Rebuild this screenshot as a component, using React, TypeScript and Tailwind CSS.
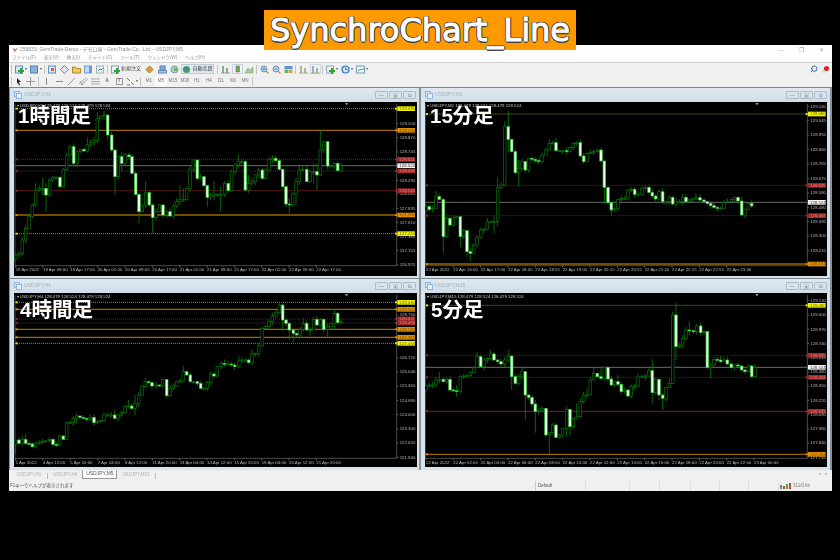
import React from 'react';
import { Search } from 'lucide-react';

type Level = { y: number; kind: 'yellow' | 'orange' | 'red' | 'redSolid' | 'redDim' | 'grey'; price: string };

interface ChartProps {
  name: string;
  label: string;
  labelClass: string;
  ox: number;
  oy: number;
  w: number;
  axisX: number;
  axisY: number;
  startX: number;
  marker: number;
  candles: string;
  levels: Level[];
  prices: [number, string][];
  times: string[];
}

const LINE: Record<string, string> = { yellow: '#8f8f00', orange: '#9c6600', red: '#6e1c1c', redSolid: '#7a2020', redDim: '#551616', grey: '#6c6c6c' };
const TAG: Record<string, string> = { yellow: '#f2f200', orange: '#e08e00', red: '#a32a2a', redSolid: '#a32a2a', redDim: '#a32a2a', grey: '#f4f4f4' };
const TAGTEXT: Record<string, string> = { yellow: '#6a6a00', orange: '#6e4500', red: '#d08080', redSolid: '#d08080', redDim: '#d08080', grey: '#333' };

const CHART_H1 = '47,465 57,460 67,420 77,385 87,350 97,315 107,270,250,320 118,265 128,265,235,285 138,285,250,335 149,240 158,232 168,232 180,260 190,208 200,165 210,140 221,190,130,200 232,155 242,148 252,153 262,135,112,158 272,128 282,122 292,55,35,130 302,48 312,45,32,60 323,105,45,120 335,150 345,230,150,285 355,170 365,190,155,215 375,165 387,170 396,220 407,283 417,335,280,370 427,318 437,278,245,325 448,315 458,353,310,400 468,335 478,315 489,345 499,335 510,348 520,318 530,305,295,325 540,298,255,315 550,298,265,305 560,265 570,210,200,275 580,180 592,235 602,230 612,257 622,292,255,320 632,285 642,285,245,300 652,283 662,283,260,335 674,250 685,272 695,215 705,195 715,185,163,205 725,185 736,270 746,250,225,280 756,245 766,225 776,210 787,235 797,210 807,178 817,175,165,190 827,182 838,208 848,260 858,312 868,315,295,345 878,282 888,245,232,315 898,210,195,255 908,208 920,245 930,215 941,215,190,250 951,225,190,270 961,150,90,228 971,125 983,198 993,198 1003,190 1013,212 1023,197';

const CHART_M15 = '18,320 28,328 38,325 48,290,272,325 58,298 70,410,295,458 80,355 90,375 100,352 110,350 121,410,385,442 131,392 141,455,420,470 151,460,445,485 161,435 171,412 182,390 192,388 202,365,355,390 212,365 222,365,348,400 233,262,230,378 243,255 254,80,65,250 265,118,32,158 275,155 286,218 296,205,180,260 306,185 316,210 326,175 336,178 346,182 356,185 366,165 378,150 388,130,118,150 398,128 408,152,112,155 418,152 428,152 440,155 450,142 460,130 470,128 481,168 491,185 501,160 511,157 521,155 532,150 543,183 553,262,185,312 564,308 574,330,305,348 584,325 594,298 604,295 614,295 624,270 634,268 644,283 654,283 666,265 676,262,255,272 687,277 697,288 707,297 717,275 728,305 738,305 748,292 758,312 768,305,295,322 778,305 788,292 798,305 808,300 818,297 828,293,280,302 840,300 852,305 862,310 872,317 882,322 892,325,318,335 902,325 912,308 922,305 934,298 944,292 954,303 965,345,290,348 975,328 985,310 995,318';

const CHART_H4 = '47,480,480,522 57,490 67,478 77,490,462,495 87,492 97,500 107,490 117,488 127,485 137,482 149,478 159,493 169,495 179,468 190,478 200,428,425,480 210,428 220,415 230,408,400,430 240,412 250,415 260,418 270,412 282,428 292,425 302,422 312,405 323,405 333,405 344,415,390,420 354,405 364,398 375,380 385,378,360,385 395,385 405,370,345,405 416,345 426,320 436,305,293,325 446,308 456,318 468,315 478,318 488,298,295,325 500,347,298,355 510,325 520,318 530,305 540,303 550,275,258,305 560,285 571,305 581,305 592,310 602,325 612,325 622,308 632,282 642,288 652,260 664,250 674,252,238,260 684,252 694,255 704,260 716,243,230,265 726,240 736,240 746,248 756,220 766,220 776,198 787,145,140,200 797,140 807,125 817,108 828,98 838,75,70,100 848,120,70,152 858,130 868,150,125,180 880,160,145,190 890,165 900,148 910,130,115,155 920,150 930,150,140,168 941,118 951,135 961,118 971,148 983,140,130,172 993,130 1003,100,88,150 1013,128 1023,125';

const CHART_M5 = '18,318 28,315 38,315 48,300 58,298,275,310 70,305 80,298 90,330 100,332 110,335,315,350 121,290 131,288 141,287 151,278 161,262 171,230,215,265 182,260 192,240 202,235 212,222,208,240 222,240 233,245 243,252 254,240 265,228,210,245 275,290,228,330 286,310 296,290 306,275,262,300 316,345,275,420 326,352 336,372 346,395,360,458 356,392 366,385 378,465,385,470 388,458,455,522 398,435 408,472,430,475 418,465 428,445 440,388,380,470 450,440,388,465 460,415 470,410,370,415 481,365 491,345 501,345,325,355 511,300 521,280,262,300 532,290 543,295,262,300 553,262 564,297 574,315 584,305 594,313,285,320 604,335 614,330 624,348 634,320 644,318 654,290 666,290 676,288 687,272 697,338,238,370 707,298 717,345,295,360 728,355,340,390 738,322 748,310,295,320 758,105,95,312 768,200,67,240 778,195 788,175 798,150 808,152,125,165 820,155 830,138 842,158 852,155 862,263,155,268 872,255,252,295 882,238 892,240 902,245,228,250 912,240 922,252 934,263 944,255 954,258,248,265 965,270 975,275 985,258 995,290,255,295 1005,262';

function seeded(i: number, mod: number) {
  return ((i * 7919 + 13) ^ (i * 31)) % mod;
}

function Candles({ data }: { data: string }) {
  const rows = data.split(' ').map((r) => r.split(',').map(Number));
  return (
    <g>
      {rows.map((r, i) => {
        const [x, close, hiSet, loSet] = r;
        const open = i === 0 ? close + 12 : rows[i - 1][1];
        const top = Math.min(open, close);
        const bottom = Math.max(open, close);
        const hi = hiSet ?? top - 2 - seeded(i, 9);
        const lo = loSet ?? bottom + 2 + seeded(i + 5, 9);
        const bear = close > open;
        return (
          <g key={i}>
            <line x1={x} x2={x} y1={hi} y2={lo} stroke="#087c08" strokeWidth={2.5} />
            <rect
              x={x - 4}
              y={top}
              width={8}
              height={Math.max(bottom - top, 3)}
              fill={bear ? '#eaffea' : '#000'}
              stroke={bear ? '#25c025' : '#0a760a'}
              strokeWidth={2}
            />
          </g>
        );
      })}
    </g>
  );
}

function ChartWindow({ name, label, labelClass, ox, oy, w, axisX, axisY, startX, marker, candles, levels, prices, times }: ChartProps) {
  const h = 174;
  return (
    <div className="flex h-full flex-col bg-[#d6e2ec] pl-[4px] pr-[2px]">
      <div className="flex h-[14px] items-center bg-gradient-to-b from-[#dfe9f1] to-[#cfdde8]">
        <svg width="8" height="8" viewBox="0 0 8 8">
          <rect x="0.5" y="0.5" width="5" height="5" fill="none" stroke="#8fb6dc" />
          <rect x="2.5" y="2.5" width="5" height="5" fill="#e6f0f8" stroke="#8fb6dc" />
        </svg>
        <span className="ml-[2px] text-[5px] text-[#a8b2bc]">{name}</span>
        <div className="ml-auto mr-[1px] flex gap-[1px]">
          {['—', '▣', '⧉'].map((g) => (
            <div key={g} className="flex h-[8px] w-[13px] items-center justify-center rounded-[1px] border border-[#aebcc8] bg-[#d9e3eb] text-[5px] leading-none text-[#77828c]">
              {g}
            </div>
          ))}
        </div>
      </div>
      <div className="relative bg-black" style={{ width: w, height: h }}>
        <svg width={w} height={h} viewBox={`${ox} ${oy} ${w * 3} ${h * 3}`} className="block">
          <path d={`M${startX - 2} ${oy + 6}V${axisY}H${axisX}V${oy + 6}`} fill="none" stroke="#6f6f6f" strokeWidth={2} />
          <polygon points={`${marker - 5},${oy + 4} ${marker + 5},${oy + 4} ${marker},${oy + 9}`} fill="#c8c8c8" />
          {levels.map((l) => (
            <line
              key={l.y}
              x1={startX - 2}
              x2={axisX}
              y1={l.y}
              y2={l.y}
              stroke={LINE[l.kind]}
              strokeWidth={l.kind === 'orange' ? 4 : 3}
              strokeDasharray={l.kind === 'yellow' || l.kind === 'red' ? '3 3' : undefined}
            />
          ))}
          <Candles data={candles} />
          {prices.map(([y, p]) => (
            <g key={p}>
              <line x1={axisX} x2={axisX + 5} y1={y} y2={y} stroke="#8a8a8a" strokeWidth={2} />
              <text x={axisX + 9} y={y + 4} fontSize={13} fill="#b9b9b9">{p}</text>
            </g>
          ))}
          {levels.map((l) => (
            <g key={l.y}>
              {l.kind !== 'grey' && (
                <>
                  <rect x={startX} y={l.y - 3} width={6} height={6} fill={TAG[l.kind]} opacity={0.9} />
                  <rect x={axisX - 5} y={l.y - 3} width={6} height={6} fill={TAG[l.kind]} opacity={0.9} />
                </>
              )}
              <rect x={axisX + 2} y={l.y - 7} width={53} height={14} fill={TAG[l.kind]} />
              <text x={axisX + 8} y={l.y + 4} fontSize={13} fill={TAGTEXT[l.kind]}>{l.price}</text>
            </g>
          ))}
          {times.map((t, i) => {
            const x = startX + i * 82;
            return (
              <g key={t}>
                <line x1={x} x2={x} y1={axisY} y2={axisY + 6} stroke="#8a8a8a" strokeWidth={2} />
                <text x={x} y={axisY + 17} fontSize={13} fill="#b9b9b9">{t}</text>
              </g>
            );
          })}
          <text x={startX + 3} y={oy + 16} fontSize={13} fill="#c4c4c4">
            ▾ {name}  128.479 128.524 128.479 128.524
          </text>
        </svg>
        <div className={`absolute text-[20.5px] leading-none font-bold text-white ${labelClass}`}>{label}</div>
      </div>
    </div>
  );
}

function TI({ w = 12, children }: { w?: number; children?: React.ReactNode }) {
  return <div className="flex h-full shrink-0 items-center justify-center" style={{ width: w }}>{children}</div>;
}

function Sep() {
  return <div className="mx-[1px] h-[9px] w-px shrink-0 bg-[#c4c4c4]" />;
}

function Caret() {
  return <span className="ml-[1px] text-[4px] leading-none text-[#555]">▾</span>;
}

function Ico({ children }: { children: React.ReactNode }) {
  return <svg width="9" height="9" viewBox="0 0 9 9">{children}</svg>;
}

const Doc = ({ c = '#5d8fc4', f = '#dcebf8' }: { c?: string; f?: string }) => <rect x="0.5" y="1" width="7" height="7" fill={f} stroke={c} />;
const Plus = () => <path d="M3 6h6M6 3v6" stroke="#2fa62f" strokeWidth="2" />;

function Toolbars() {
  return (
    <>
      <div className="flex h-[12px] items-center pl-[1px] text-[5px] text-[#555]">
        <Sep />
        <TI w={15}><Ico><Doc /><Plus /></Ico><Caret /></TI>
        <TI w={15}><Ico><Doc c="#4d7fb8" f="#8fb2d6" /></Ico><Caret /></TI>
        <Sep />
        <TI><Ico><Doc /><rect x="3" y="3" width="3" height="3" fill="#d65a3a" /></Ico></TI>
        <TI><Ico><path d="M4.5 0.5l4 4-4 4-4-4z" fill="#dfe4e8" stroke="#7a8a96" /></Ico></TI>
        <TI><Ico><path d="M0.5 2h3l1 1.5h4v4.5h-8z" fill="#eec65a" stroke="#b48a28" /></Ico></TI>
        <TI><Ico><Doc c="#6a9ad0" f="#c8dcf0" /><rect x="5" y="1" width="2.5" height="7" fill="#6a9ad0" /></Ico></TI>
        <TI><Ico><Doc c="#9ab0c4" f="#eef4f8" /><path d="M2 6l2-2 1 1 2-2" stroke="#4aa04a" fill="none" /></Ico></TI>
        <Sep />
        <TI w={34}>
          <Ico><Doc c="#8a9aa8" f="#eef2f6" /><Plus /></Ico>
          <span className="ml-[1px] text-[#444]">新規注文</span>
        </TI>
        <TI w={13}><Ico><path d="M4.5 1l3.5 3.5-3.5 3.5-3.5-3.5z" fill="#d8a23c" stroke="#a0762a" /></Ico></TI>
        <TI><Ico><rect x="2" y="1" width="5" height="4" fill="#7fb0e0" stroke="#4d7fb8" /><rect x="0.5" y="5.5" width="8" height="2.5" fill="#a8c4e0" stroke="#6a8cb0" /></Ico></TI>
        <TI><Ico><circle cx="4.5" cy="4.5" r="3.5" fill="#b4ccd8" stroke="#7f9aaa" /><rect x="4" y="3" width="3" height="3" fill="#6fae6f" /></Ico></TI>
        <div className="ml-[1px] flex h-[10px] w-[33px] items-center justify-center border border-[#bfcbd6] bg-[#dfe9f2] text-[#333]">
          <Ico><circle cx="4.5" cy="4.5" r="3.5" fill="#4e9a5e" /><path d="M1 3h5v2H1z" fill="#3f7fc4" /></Ico>
          <span className="ml-[1px]">自動売買</span>
        </div>
        <div className="ml-[2px]"><Sep /></div>
        <TI><Ico><path d="M2 1v7M6 3v5" stroke="#5e9e5e" strokeWidth="1.5" /><path d="M0 8h9" stroke="#999" /></Ico></TI>
        <TI><div className="flex h-[10px] w-[11px] items-center justify-center border border-[#c8d2da] bg-[#eef3f7]"><Ico><rect x="3" y="1" width="3.5" height="6" fill="#5cae5c" stroke="#b85a4a" strokeWidth="0.6" /></Ico></div></TI>
        <TI><Ico><path d="M0 8L3 3l2 2 3-3v6z" fill="#a9c79a" stroke="#8aa67c" strokeWidth="0.6" /></Ico></TI>
        <Sep />
        <TI><Ico><circle cx="4" cy="4" r="3" fill="#bcd6ec" stroke="#6a93b8" /><path d="M2.5 4h3M4 2.5v3" stroke="#3a6a9a" strokeWidth="0.7" /><path d="M6 6l2.5 2.5" stroke="#c09a40" strokeWidth="1.4" /></Ico></TI>
        <TI><Ico><circle cx="4" cy="4" r="3" fill="#bcd6ec" stroke="#6a93b8" /><path d="M2.5 4h3" stroke="#3a6a9a" strokeWidth="0.7" /><path d="M6 6l2.5 2.5" stroke="#c09a40" strokeWidth="1.4" /></Ico></TI>
        <TI><Ico><rect x="0.5" y="1" width="8" height="3" fill="#5a9ad0" /><rect x="0.5" y="4.5" width="3.8" height="3.5" fill="#6ab06a" /><rect x="4.8" y="4.5" width="3.7" height="3.5" fill="#d0a04a" /></Ico></TI>
        <Sep />
        <TI><Ico><path d="M2 1v7M6 3v5" stroke="#8aa67c" strokeWidth="1.5" /><path d="M0 8h9" stroke="#aa7" /></Ico></TI>
        <TI><div className="flex h-[10px] w-[11px] items-center justify-center border border-[#cfd8e0]"><Ico><path d="M2 1v7M6 3v5" stroke="#7c9ab4" strokeWidth="1.5" /><path d="M0 8h9" stroke="#aa7" /></Ico></div></TI>
        <Sep />
        <TI w={15}><Ico><Doc c="#9aa6b0" f="#eef2f6" /><Plus /></Ico><Caret /></TI>
        <TI w={15}><Ico><circle cx="4.5" cy="4.5" r="3.5" fill="#cfe2f2" stroke="#2f78bc" strokeWidth="1.2" /><path d="M4.5 2.5v2h2" stroke="#2f78bc" fill="none" /></Ico><Caret /></TI>
        <TI w={15}><Ico><rect x="0.5" y="1" width="8" height="7" fill="#eef3f8" stroke="#7a9ab8" /><path d="M2 6l2-2 2 1 2-2" stroke="#58a658" fill="none" /></Ico><Caret /></TI>
        <div className="ml-auto mr-[3px] flex items-center gap-[4px]">
          <Search size={8} className="text-[#2f72b8] -scale-x-100" strokeWidth={3} />
          <div className="relative h-[7px] w-[7px]">
            <div className="absolute bottom-0 left-0 h-[4px] w-[4px] rounded-full bg-[#d8d8d8]" />
            <div className="absolute right-0 top-0 h-[5px] w-[5px] rounded-full bg-[#d8261c]" />
          </div>
        </div>
      </div>
      <div className="flex h-[12px] items-center pl-[1px] text-[4.5px] text-[#777]">
        <Sep />
        <TI w={10}><Ico><path d="M3 1l4 4H5l1 3-1 .4L4 5.4 3 6.6z" fill="#222" /></Ico></TI>
        <TI w={14}><Ico><path d="M4.5 0v9M0 4.5h9" stroke="#999" strokeWidth="1" /></Ico></TI>
        <Sep />
        <TI w={13}><Ico><path d="M4.5 1v7" stroke="#888" strokeWidth="1" /></Ico></TI>
        <TI><Ico><path d="M1 4.5h7" stroke="#888" strokeWidth="1" /></Ico></TI>
        <TI><Ico><path d="M1 8l7-7" stroke="#9a9a9a" strokeWidth="1" /></Ico></TI>
        <TI><Ico><path d="M0 7l7-6M2 8l7-6M1 4l3 4" stroke="#9a9a9a" strokeWidth="0.9" /></Ico></TI>
        <TI><Ico><path d="M0 2h9M0 4.5h9M0 7h9" stroke="#a0a0a0" strokeWidth="0.9" /></Ico></TI>
        <TI><span className="font-bold text-[#666]">A</span></TI>
        <TI><div className="flex h-[7px] w-[7px] items-center justify-center border border-[#999] font-bold text-[#666]">T</div></TI>
        <TI w={14}><Ico><path d="M1 1l3 3M8 8L5 5M1 8h3" stroke="#777" strokeWidth="1" /></Ico><Caret /></TI>
        <Sep />
        <div className="ml-[1px] flex h-full items-center">
          {['M1', 'M5', 'M15', 'M30', 'H1', 'H4', 'D1', 'W1', 'MN'].map((t) => (
            <div key={t} className={`flex h-[11px] w-[12px] items-center justify-center ${t === 'M5' ? 'bg-[#fafafa]' : ''}`}>{t}</div>
          ))}
        </div>
        <Sep />
      </div>
    </>
  );
}

export default function App() {
  return (
    <div className="flex h-[560px] w-[840px] flex-col overflow-hidden bg-black font-['Liberation_Sans','Noto_Sans_CJK_JP',sans-serif]">
      <div className="flex h-[45px] shrink-0 items-start justify-center pt-[10px]">
        <div className="relative z-10 flex h-[40px] w-[312px] items-center justify-center bg-[#ff9900] font-['DejaVu_Sans',sans-serif] text-[32px] leading-none whitespace-nowrap text-white [-webkit-text-stroke:1px_white] [text-shadow:1.5px_0_0_#444,-1.5px_0_0_#444,0_1.5px_0_#444,0_-1.5px_0_#444,1px_1px_0_#444,-1px_-1px_0_#444,1px_-1px_0_#444,-1px_1px_0_#444]">
          SynchroChart_Line
        </div>
      </div>

      <div className="ml-[9px] flex h-[446px] w-[823px] flex-col bg-[#f0f0f0] blur-[0.4px]">
        <div className="flex h-[10px] shrink-0 items-center bg-white pl-[3px] text-[5px] text-[#8c8c8c]">
          <svg width="6" height="6" viewBox="0 0 6 6"><path d="M0.5 1l2.5 4 2.5-4-1.5 0.5-1 1.5-1-1.5z" fill="#d8582c" /></svg>
          <span className="ml-[2px]">256833: GemTrade-Demo - デモ口座 - GemTrade Co., Ltd. - USDJPY,M5</span>
          <div className="ml-auto mr-px flex text-[6px] leading-none text-[#a8a8a8]">
            <span className="w-[20px] text-center">—</span><span className="w-[20px] text-center">❐</span><span className="w-[20px] text-center">✕</span>
          </div>
        </div>
        <div className="flex h-[8px] shrink-0 items-center gap-[8px] border-b border-[#d2d2d2] bg-[#fcfcfc] pl-[3px] text-[4.5px] text-[#9a9a9a]">
          <span>ファイル(F)</span><span>表示(V)</span><span>挿入(I)</span><span>チャート(C)</span><span>ツール(T)</span><span>ウィンドウ(W)</span><span>ヘルプ(H)</span>
        </div>
        <div className="h-[24px] shrink-0">
          <Toolbars />
        </div>

        <div className="grid h-[383px] shrink-0 grid-cols-[409px_409px] grid-rows-[191px_191px] gap-x-[2px] border-t border-[#7d858c] bg-[#8a929a] pl-px">
          <div className="border-b border-[#7d858c]">
            <ChartWindow
              name="USDJPY,H1" label="1時間足" labelClass="left-[4px] top-[4px]" ox={42} oy={6} w={403} axisX={1190} axisY={497} startX={47} marker={1040}
              candles={CHART_H1}
              levels={[
                { y: 26, kind: 'yellow', price: '129.430' },
                { y: 91, kind: 'orange', price: '129.100' },
                { y: 178, kind: 'red', price: '128.611' },
                { y: 197, kind: 'grey', price: '128.524' },
                { y: 213, kind: 'red', price: '128.433' },
                { y: 272, kind: 'redDim', price: '128.133' },
                { y: 345, kind: 'orange', price: '127.765' },
                { y: 401, kind: 'yellow', price: '127.434' },
              ]}
              prices={[[71, '129.200'], [113, '128.870'], [156, '128.745'], [241, '128.290'], [282, '128.065'], [325, '127.835'], [367, '127.610'], [410, '127.380'], [452, '127.155'], [495, '126.925']]}
              times={['19 Apr 2022', '19 Apr 09:00', '19 Apr 17:00', '20 Apr 01:00', '20 Apr 09:00', '20 Apr 17:00', '21 Apr 01:00', '21 Apr 09:00', '21 Apr 17:00', '22 Apr 01:00', '22 Apr 09:00', '22 Apr 17:00']}
            />
          </div>
          <div className="border-b border-[#7d858c]">
            <ChartWindow
              name="USDJPY,M5" label="15分足" labelClass="left-[5px] top-[4px]" ox={15} oy={6} w={402} axisX={1162} axisY={497} startX={18} marker={1011}
              candles={CHART_M15}
              levels={[
                { y: 42, kind: 'yellow', price: '129.080' },
                { y: 256, kind: 'red', price: '128.625' },
                { y: 307, kind: 'grey', price: '128.524' },
                { y: 347, kind: 'red', price: '128.433' },
                { y: 492, kind: 'orange', price: '128.124' },
              ]}
              prices={[[20, '129.140'], [62, '129.045'], [105, '128.955'], [149, '128.860'], [192, '128.765'], [236, '128.675'], [279, '128.580'], [322, '128.490'], [365, '128.395'], [408, '128.305'], [452, '128.210']]}
              times={['22 Apr 2022', '22 Apr 16:00', '22 Apr 17:00', '22 Apr 18:05', '22 Apr 18:55', '22 Apr 19:05', '22 Apr 20:15', '22 Apr 20:55', '22 Apr 21:20', '22 Apr 22:15', '22 Apr 22:55', '22 Apr 23:30']}
            />
          </div>
          <div>
            <ChartWindow
              name="USDJPY,H4" label="4時間足" labelClass="left-[6px] top-[7px]" ox={42} oy={39} w={403} axisX={1190} axisY={535} startX={47} marker={1040}
              candles={CHART_H4}
              levels={[
                { y: 67, kind: 'yellow', price: '129.430' },
                { y: 88, kind: 'orange', price: '129.100' },
                { y: 117, kind: 'red', price: '128.611' },
                { y: 129, kind: 'red', price: '128.433' },
                { y: 148, kind: 'orange', price: '128.133' },
                { y: 172, kind: 'orange', price: '127.765' },
                { y: 190, kind: 'yellow', price: '127.434' },
              ]}
              prices={[[105, '128.760'], [234, '126.720'], [276, '126.040'], [318, '125.360'], [362, '124.680'], [404, '124.000'], [447, '123.300'], [489, '122.620'], [532, '121.940']]}
              times={['1 Apr 2022', '4 Apr 12:00', '5 Apr 20:00', '7 Apr 04:00', '8 Apr 12:00', '11 Apr 20:00', '13 Apr 04:00', '14 Apr 12:00', '15 Apr 20:00', '19 Apr 04:00', '20 Apr 12:00', '21 Apr 20:00']}
            />
          </div>
          <div>
            <ChartWindow
              name="USDJPY,M15" label="5分足" labelClass="left-[6px] top-[7px]" ox={15} oy={39} w={402} axisX={1162} axisY={535} startX={18} marker={1011}
              candles={CHART_M5}
              levels={[
                { y: 76, kind: 'yellow', price: '129.080' },
                { y: 226, kind: 'red', price: '128.625' },
                { y: 262, kind: 'grey', price: '128.524' },
                { y: 292, kind: 'red', price: '128.433' },
                { y: 394, kind: 'redSolid', price: '128.133' },
                { y: 523, kind: 'orange', price: '127.764' },
              ]}
              prices={[[62, '129.130'], [105, '129.000'], [148, '128.870'], [190, '128.740'], [234, '128.610'], [276, '128.480'], [318, '128.350'], [362, '128.220'], [404, '128.090'], [447, '127.960'], [489, '127.840'], [532, '127.710']]}
              times={['22 Apr 2022', '22 Apr 02:00', '22 Apr 04:00', '22 Apr 06:00', '22 Apr 08:00', '22 Apr 10:00', '22 Apr 12:00', '22 Apr 14:00', '22 Apr 16:00', '22 Apr 18:00', '22 Apr 20:00', '22 Apr 22:00', '23 Apr 00:00']}
            />
          </div>
        </div>

        <div className="flex h-[11px] shrink-0 items-start bg-[#f0f0f0] pl-[8px] text-[4.5px] text-[#b0b0b0]">
          <span className="mt-[2px]">USDJPY,H1</span>
          <div className="ml-[6px] mt-[3px] h-[6px] w-px bg-[#bbb]" />
          <span className="ml-[5px] mt-[2px]">USDJPY,H4</span>
          <div className="ml-[5px] flex h-[9px] w-[35px] items-center justify-center border-x border-b border-[#999] bg-white text-[5px] text-[#555]">USDJPY,M5</div>
          <span className="ml-[5px] mt-[2px]">USDJPY,M15</span>
          <div className="ml-[5px] mt-[3px] h-[6px] w-px bg-[#bbb]" />
          <div className="ml-auto mr-[4px] mt-[1px] flex gap-[4px] text-[#bbb]"><span>◂</span><span>▸</span></div>
        </div>
        <div className="flex h-[10px] shrink-0 items-center bg-[#f0f0f0] pl-px text-[4.5px] text-[#555]">
          <span className="w-[525px]">F1キーでヘルプが表示されます</span>
          <div className="h-full w-[50px] border-l border-[#ccc] pl-[2px] leading-[10px]">Default</div>
          <div className="h-full w-[44px] border-l border-[#ddd]" />
          <div className="h-full w-[30px] border-l border-[#ddd]" />
          <div className="h-full w-[31px] border-l border-[#ddd]" />
          <div className="h-full w-[29px] border-l border-[#ddd]" />
          <div className="h-full w-[29px] border-l border-[#ddd]" />
          <div className="h-full w-[30px] border-l border-[#ddd]" />
          <div className="flex h-full items-center border-l border-[#ddd] pl-[1px]">
            <svg width="11" height="6" viewBox="0 0 11 6">
              <path d="M0 2h2v4H0zM6 1h2v5H6z" fill="#5b9b4b" />
              <path d="M3 3h2v3H3zM9 0h2v6H9z" fill="#b04a3a" />
            </svg>
            <span className="ml-[2px] text-[#777]">311/0 kb</span>
          </div>
        </div>
      </div>
    </div>
  );
}
